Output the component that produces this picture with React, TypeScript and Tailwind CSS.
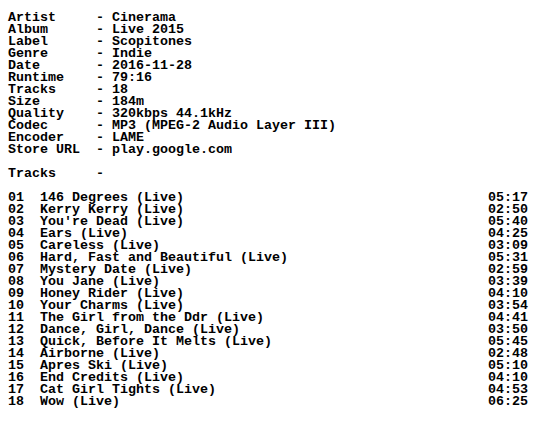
import React from "react";

const meta: [string, string][] = [
  ["Artist", "Cinerama"],
  ["Album", "Live 2015"],
  ["Label", "Scopitones"],
  ["Genre", "Indie"],
  ["Date", "2016-11-28"],
  ["Runtime", "79:16"],
  ["Tracks", "18"],
  ["Size", "184m"],
  ["Quality", "320kbps 44.1kHz"],
  ["Codec", "MP3 (MPEG-2 Audio Layer III)"],
  ["Encoder", "LAME"],
  ["Store URL", "play.google.com"],
];

const tracks: [string, string][] = [
  ["146 Degrees (Live)", "05:17"],
  ["Kerry Kerry (Live)", "02:50"],
  ["You're Dead (Live)", "05:40"],
  ["Ears (Live)", "04:25"],
  ["Careless (Live)", "03:09"],
  ["Hard, Fast and Beautiful (Live)", "05:31"],
  ["Mystery Date (Live)", "02:59"],
  ["You Jane (Live)", "03:39"],
  ["Honey Rider (Live)", "04:10"],
  ["Your Charms (Live)", "03:54"],
  ["The Girl from the Ddr (Live)", "04:41"],
  ["Dance, Girl, Dance (Live)", "03:50"],
  ["Quick, Before It Melts (Live)", "05:45"],
  ["Airborne (Live)", "02:48"],
  ["Apres Ski (Live)", "05:10"],
  ["End Credits (Live)", "04:10"],
  ["Cat Girl Tights (Live)", "04:53"],
  ["Wow (Live)", "06:25"],
];

export default function App() {
  const lines: string[] = [];
  meta.forEach(([k, v]) => lines.push(k.padEnd(11, " ") + "- " + v));
  lines.push("");
  lines.push("Tracks".padEnd(11, " ") + "-");
  lines.push("");
  tracks.forEach(([t, d], i) => {
    const num = String(i + 1).padStart(2, "0");
    lines.push((num + "  " + t).padEnd(60, " ") + d);
  });
  return (
    <div className="w-[536px] h-[432px] bg-white overflow-hidden">
      <pre
        className="m-0 pl-2 pt-3 text-black font-bold text-[13.333px] leading-[12px] whitespace-pre"
        style={{ fontFamily: '"Liberation Mono", "DejaVu Sans Mono", monospace' }}
      >
        {lines.join("\n")}
      </pre>
    </div>
  );
}
